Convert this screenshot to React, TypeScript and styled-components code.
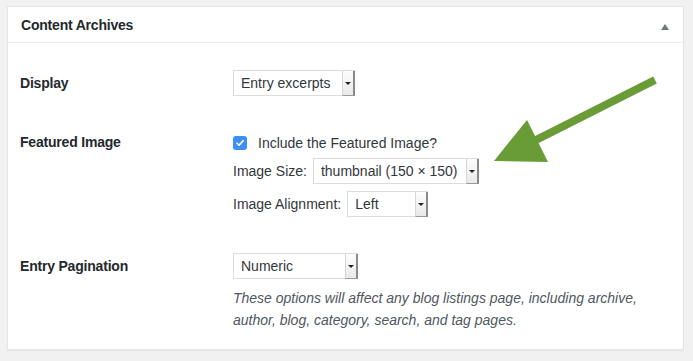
import styled, { createGlobalStyle } from "styled-components";

const Global = createGlobalStyle`
    html, body {
        margin: 0;
        padding: 0;
        background: #f1f1f1;
    }
    body {
        font-family: "Liberation Sans", Arial, sans-serif;
        font-size: 14px;
        color: #23282d;
    }
`

const Page = styled.div`
    position: relative;
    width: 693px;
    height: 361px;
    padding: 6px 0 0 7px;
    box-sizing: border-box;
`

const Panel = styled.div`
    width: 677px;
    height: 344px;
    box-sizing: border-box;
    background: #fff;
    border: 1px solid #e5e5e5;
    box-shadow: 0 1px 1px rgba(0, 0, 0, .04);
`

const Header = styled.div`
    height: 35px;
    display: flex;
    align-items: center;
    justify-content: space-between;
    padding: 0 14px 0 13px;
    border-bottom: 1px solid #eee;
    font-weight: 700;
    font-size: 14px;
    letter-spacing: -0.2px;
`

const Toggle = styled.span`
    width: 0;
    height: 0;
    margin-top: 4px;
    border-left: 4px solid transparent;
    border-right: 4px solid transparent;
    border-bottom: 6px solid #72777c;
`

const Body = styled.div`
    padding: 27px 0 0 12px;
    display: flex;
    flex-direction: column;
`

const Row = styled.div<{ $top: number }>`
    display: grid;
    grid-template-columns: 213px 1fr;
    margin-top: ${p => p.$top}px;
`

const Label = styled.div<{ $offset?: number }>`
    font-weight: 700;
    font-size: 14px;
    line-height: 20px;
    letter-spacing: -0.2px;
    padding-top: ${p => p.$offset ?? 0}px;
`

const Controls = styled.div`
    display: flex;
    flex-direction: column;
    align-items: flex-start;
`

const Line = styled.div<{ $top?: number }>`
    display: flex;
    align-items: center;
    gap: 6px;
    margin-top: ${p => p.$top ?? 0}px;
    color: #32373c;
    font-size: 14px;
`

const Select = styled.div<{ $width: number }>`
    width: ${p => p.$width}px;
    height: 26px;
    box-sizing: border-box;
    display: flex;
    align-items: stretch;
    background: #fff;
    border: 1px solid #dcdcdc;
    border-right: none;
    color: #32373c;
    font-size: 14px;
`

const SelectText = styled.span`
    flex: 1;
    display: flex;
    align-items: center;
    padding-left: 7px;
    white-space: nowrap;
`

const Caret = styled.span`
    width: 10px;
    display: flex;
    align-items: center;
    justify-content: center;
    background: linear-gradient(#fdfdfd, #e9e9e9);
    border-left: 1px solid #d6d6d6;
    border-right: 2px solid #8a8a8a;
    border-bottom: 1px solid #9a9a9a;
    margin-bottom: -1px;

    &::after {
        content: "";
        border-left: 3px solid transparent;
        border-right: 3px solid transparent;
        border-top: 3px solid #222;
    }
`

const Check = styled.span`
    width: 14px;
    height: 14px;
    border-radius: 3px;
    background: #3d8ef7;
    display: flex;
    align-items: center;
    justify-content: center;
    margin-right: 5px;

    svg {
        width: 10px;
        height: 10px;
    }
`

const Description = styled.p`
    margin: 8px 0 0;
    font-style: italic;
    font-size: 14px;
    line-height: 22px;
    color: #50575e;
    width: 420px;
`

const Arrow = styled.svg`
    position: absolute;
    left: 0;
    top: 0;
    width: 693px;
    height: 361px;
    pointer-events: none;
`

function Dropdown({ width, value }: { width: number; value: string }) {
    return (
        <Select $width={width}>
            <SelectText>{value}</SelectText>
            <Caret />
        </Select>
    )
}

export default function App() {
    return (
        <Page>
            <Global />
            <Panel>
                <Header>
                    Content Archives
                    <Toggle />
                </Header>
                <Body>
                    <Row $top={0}>
                        <Label $offset={3}>Display</Label>
                        <Controls>
                            <Dropdown width={122} value="Entry excerpts" />
                        </Controls>
                    </Row>
                    <Row $top={36}>
                        <Label $offset={0}>Featured Image</Label>
                        <Controls>
                            <Line $top={3}>
                                <Check>
                                    <svg viewBox="0 0 10 10" fill="none">
                                        <path d="M2 5.2 4.1 7.3 8.2 2.6" stroke="#fff" strokeWidth="1.6" strokeLinecap="round" strokeLinejoin="round" />
                                    </svg>
                                </Check>
                                Include the Featured Image?
                            </Line>
                            <Line $top={7}>
                                Image Size:
                                <Dropdown width={166} value="thumbnail (150 × 150)" />
                            </Line>
                            <Line $top={7}>
                                Image Alignment:
                                <Dropdown width={81} value="Left" />
                            </Line>
                        </Controls>
                    </Row>
                    <Row $top={36}>
                        <Label $offset={3}>Entry Pagination</Label>
                        <Controls>
                            <Dropdown width={125} value="Numeric" />
                            <Description>
                                These options will affect any blog listings page, including archive,
                                author, blog, category, search, and tag pages.
                            </Description>
                        </Controls>
                    </Row>
                </Body>
            </Panel>
            <Arrow viewBox="0 0 693 361">
                <line x1="655" y1="80" x2="528" y2="144" stroke="#699b37" strokeWidth="8" />
                <polygon points="494,161 527,120 548,162" fill="#699b37" />
            </Arrow>
        </Page>
    )
}
